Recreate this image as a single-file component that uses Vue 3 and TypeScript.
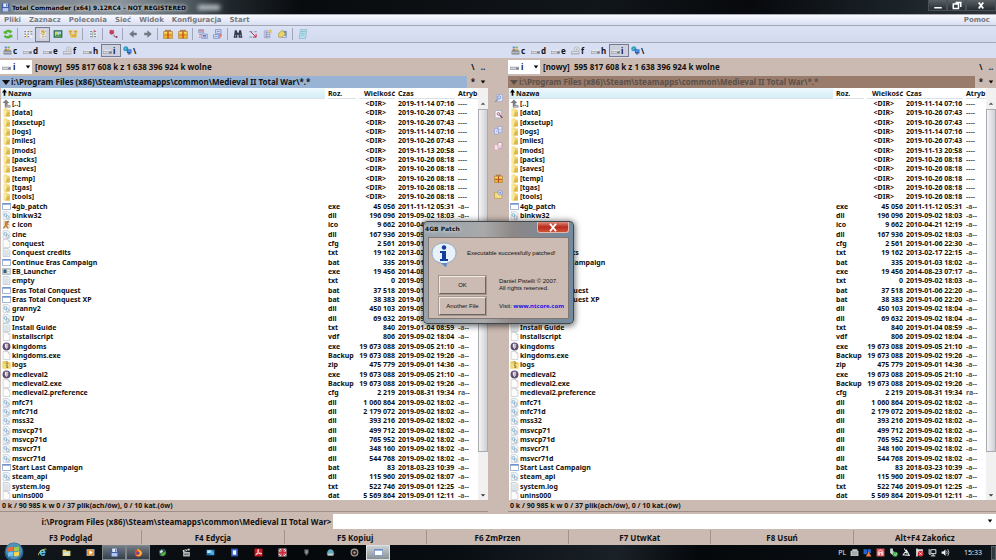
<script setup lang="ts">
import { ref } from 'vue'

interface Entry {
  name: string
  ext: string
  size: string
  date: string
  attr: string
  icon: string
}

const raw = `up|[..]||<DIR>|2019-11-14 07:16|----
folder|[data]||<DIR>|2019-10-26 07:43|----
folder|[dxsetup]||<DIR>|2019-10-26 07:43|----
folder|[logs]||<DIR>|2019-11-14 07:16|----
folder|[miles]||<DIR>|2019-10-26 07:43|----
folder|[mods]||<DIR>|2019-11-13 20:58|----
folder|[packs]||<DIR>|2019-10-26 08:18|----
folder|[saves]||<DIR>|2019-10-26 08:18|----
folder|[temp]||<DIR>|2019-10-26 08:18|----
folder|[tgas]||<DIR>|2019-10-26 08:18|----
folder|[tools]||<DIR>|2019-10-26 08:18|----
window|4gb_patch|exe|45 056|2011-11-12 05:31|-a--
dll|binkw32|dll|196 096|2019-09-02 18:03|-a--
knight|c icon|ico|9 662|2010-04-21 12:19|-a--
dll|cine|dll|167 936|2019-09-02 18:03|-a--
page|conquest|cfg|2 561|2019-01-06 22:30|-a--
text|Conquest credits|txt|19 162|2013-02-17 22:15|-a--
window|Continue Eras Campaign|bat|335|2019-01-03 18:02|-a--
launcher|EB_Launcher|exe|19 456|2014-08-23 07:17|-a--
text|empty|txt|0|2019-09-02 18:03|-a--
window|Eras Total Conquest|bat|37 518|2019-01-06 22:20|-a--
window|Eras Total Conquest XP|bat|38 383|2019-01-06 22:20|-a--
dll|granny2|dll|450 103|2019-09-02 18:04|-a--
dll|IDV|dll|69 632|2019-09-02 18:04|-a--
text|Install Guide|txt|840|2019-01-04 08:59|-a--
page|installscript|vdf|806|2019-09-02 18:04|-a--
shield|kingdoms|exe|19 673 088|2019-09-05 21:10|-a--
page|kingdoms.exe|Backup|19 673 088|2019-09-02 19:26|-a--
zip|logs|zip|475 779|2019-09-01 14:36|-a--
shield|medieval2|exe|19 673 088|2019-09-05 21:10|-a--
page|medieval2.exe|Backup|19 673 088|2019-09-02 19:26|-a--
page|medieval2.preference|cfg|2 219|2019-08-31 19:34|ra--
dll|mfc71|dll|1 060 864|2019-09-02 18:02|-a--
dll|mfc71d|dll|2 179 072|2019-09-02 18:02|-a--
dll|mss32|dll|393 216|2019-09-02 18:02|-a--
dll|msvcp71|dll|499 712|2019-09-02 18:02|-a--
dll|msvcp71d|dll|765 952|2019-09-02 18:02|-a--
dll|msvcr71|dll|348 160|2019-09-02 18:02|-a--
dll|msvcr71d|dll|544 768|2019-09-02 18:02|-a--
window|Start Last Campaign|bat|83|2018-03-23 10:39|-a--
dll|steam_api|dll|115 960|2019-09-02 18:07|-a--
text|system.log|txt|522 746|2019-09-01 12:25|-a--
page|unins000|dat|5 569 864|2019-09-01 12:11|-a--`

const entries: Entry[] = raw.split('\n').map((line) => {
  const [icon, name, ext, size, date, attr] = line.split('|')
  return { icon, name, ext, size, date, attr }
})

const path = 'i:\\Program Files (x86)\\Steam\\steamapps\\common\\Medieval II Total War'
const menus = ['Pliki', 'Zaznacz', 'Polecenia', 'Sieć', 'Widok', 'Konfiguracja', 'Start']
const tools = [
  'refresh', '', 'brief', 'full', 'thumbs', 'tree', '', 'invert', '', 'star', '',
  'left', 'right', '', 'gift', 'gift', '', 'pack', 'unpack', '',
  'find', 'rename', 'sync', 'copyname', '', 'notepad',
]
const drives = [
  { letter: 'c', icon: 'system' },
  { letter: 'd', icon: 'drive' },
  { letter: 'e', icon: 'drive' },
  { letter: 'f', icon: 'optical' },
  { letter: 'h', icon: 'drive' },
  { letter: 'i', icon: 'drive' },
  { letter: '\\', icon: 'network' },
]
const middle = ['view', 'edit', 'copy', 'move', '', 'gift', 'newfolder']
const keys = ['F3 Podgląd', 'F4 Edycja', 'F5 Kopiuj', 'F6 ZmPrzen', 'F7 UtwKat', 'F8 Usuń', 'Alt+F4 Zakończ']
const tasks = [
  { icon: 'ie' }, { icon: 'explorer' }, { icon: 'player' }, { icon: 'floppy', state: 'open' },
  { icon: 'firefox', state: 'open' }, { icon: 'globe' }, { icon: 'clapper' }, { icon: 'monitor' },
  { icon: 'blueapp' }, { icon: 'pdf' }, { icon: 'flag' }, { icon: 'darkshield' }, { icon: 'dome' },
  { icon: 'ring' }, { icon: 'window', state: 'active' },
]
const tray = ['keyboard', 'net', 'redbox', 'usb', 'bell', 'blocked', 'screen', 'sound']
const panels = [
  { id: 'left', active: true },
  { id: 'right', active: false },
]
const drive = ref('i')
const command = ref('')
const dialogOpen = ref(true)
</script>

<template>
  <svg class="sprite" aria-hidden="true">
    <symbol id="refresh" viewBox="0 0 16 16"><path d="M1 7V3l2 1c3-4 9-3 12 0l-3 3c-2-2-5-2-6-1l2 2zM15 9v5l-2-1c-3 3-9 3-12-1l3-3c2 3 5 3 6 1L8 9z" fill="#55b52e" /></symbol>
    <symbol id="brief" viewBox="0 0 16 16"><path d="M1 2h14v12H1z" fill="#eef0fa" /><path d="M2 3h3v2H2zm5 0h3v2H7zm5 0h3v2h-3zM2 7h3v2H2zm5 0h3v2H7zm5 0h3v2h-3zM2 11h3v2H2zm5 0h3v2H7z" fill="#8186a5" /><path d="M10 2h2v3h-2zM5 9h2v4H5z" fill="#e4c95b" /></symbol>
    <symbol id="full" viewBox="0 0 16 16"><path d="M3 1h10v14H3z" fill="#e3e3ec" /><path d="M5 2h5v3H5zm2 3h4v2H7zm0 3h3v2H7zm0 3h2v3H7z" fill="#d8ad2d" /><path d="M11 3h2v1h-2zM4 7h2v1H4zm7 4h2v1h-2z" fill="#777da0" /></symbol>
    <symbol id="thumbs" viewBox="0 0 16 16"><path d="M1 2h14v12H1z" fill="#2c6349" /><path d="M3 4h10v8H3z" fill="#a8d8e9" /><path d="M3 12l3-4 3 2 2-3 2 2v3z" fill="#4d9f34" /><circle cx="5" cy="6" r="1.5" fill="#f2ce34" /></symbol>
    <symbol id="tree" viewBox="0 0 16 16"><path d="M1 2h6v5H1zm8 0h6v5H9zM4 8h10v6H4z" fill="#e8c34c" /><path d="M4 6v4M12 6v4M2 4h4M10 4h4M6 11h6" stroke="#c77f3f" fill="none" /></symbol>
    <symbol id="invert" viewBox="0 0 16 16"><path d="M2 2h12v12H2z" fill="#edf0fb" /><path d="M3 3h4v2H3zm0 4h3v2H3zm0 4h3v2H3zm6-4h4v2H9zm0 4h4v2H9z" fill="#8186aa" /><path d="M9 1l5 3-5 2z" fill="#ba6176" /><path d="M7 5h1v9H7z" fill="#78a660" /></symbol>
    <symbol id="star" viewBox="0 0 16 16"><path d="M6 1v8M2 5h8M3 2l6 6M9 2L3 8" stroke="#c43a57" stroke-width="1.700" /><path d="M9 10h2v2H9zm3 1h3v3h-3z" fill="#7f3145" /></symbol>
    <symbol id="left" viewBox="0 0 16 16"><path d="M2 8l7-6v4h5v4H9v4z" fill="#717783" /></symbol>
    <symbol id="right" viewBox="0 0 16 16"><path d="M14 8L7 2v4H2v4h5v4z" fill="#717783" /></symbol>
    <symbol id="gift" viewBox="0 0 16 16"><path d="M4 4V2h3l1 2 1-2h3v2" fill="none" stroke="#a8642a" stroke-width="1.500" /><path d="M1 4h14v11H1z" fill="#f0b52c" stroke="#a9762a" /><path d="M2 5h12v2H2z" fill="#ffdf6a" /><path d="M7 4h2v11H7zM2 9h12v1H2z" fill="#b34a2a" /></symbol>
    <symbol id="pack" viewBox="0 0 16 16"><path d="M1 1h8v5H1zM6 8h9v7H6z" fill="#c9d3f2" stroke="#7082bb" /><path d="M2 2h6v2H2zM2 8h3v2H2zm0 4h2v2H2z" fill="#d77668" /><path d="M8 10h5v1H8zm0 2h5v1H8z" fill="#4764ac" /></symbol>
    <symbol id="unpack" viewBox="0 0 16 16"><path d="M4 1h9v6H4zM1 9h8v6H1z" fill="#d5ddf6" stroke="#5c75bb" /><path d="M6 3h5v1H6zm-3 8h4v1H3z" fill="#405caa" /><path d="M10 8h4v4h-2v3h-2z" fill="#da7968" /></symbol>
    <symbol id="find" viewBox="0 0 16 16"><path d="M3 2h3l1 4h2l1-4h3l2 12H9V9H7v5H1z" fill="#343949" /><path d="M3 9h2v3H3zm8 0h2v3h-2z" fill="#8791a6" /></symbol>
    <symbol id="rename" viewBox="0 0 16 16"><path d="M2 3h5v2H2zm8 0h4v2h-4zM2 12h5v2H2z" fill="#9aa1bf" /><path d="M4 4l9 9m0-5v5H8" stroke="#b92d3b" stroke-width="1.500" fill="none" /></symbol>
    <symbol id="sync" viewBox="0 0 16 16"><path d="M2 3h9v11H2z" fill="#dfe4f6" stroke="#8a91b2" /><path d="M3 6h8M3 9h8M3 12h8M6 3v11" stroke="#7882ab" /><path d="M10 1h5l-2 3 2 2h-5z" fill="#e6c547" /></symbol>
    <symbol id="copyname" viewBox="0 0 16 16"><path d="M6 3h8v11H6z" fill="#778eb4" /><path d="M1 7l6-5 5 6-5 5H1z" fill="#e9d56d" stroke="#a38d42" /><path d="M8 11h5v2H8z" fill="#d3e0ef" /></symbol>
    <symbol id="notepad" viewBox="0 0 16 16"><path d="M4 1h10l-2 14H2z" fill="#b7e2ef" stroke="#81aabd" /><path d="M5 4h7M5 7h6M4 10h6" stroke="#72adbf" /></symbol>
    <symbol id="drive" viewBox="0 0 16 16"><path d="M0 9l2-2h12l2 2v5H0z" fill="#a2a4ae" /><path d="M0 9l2-2h12l2 2z" fill="#e7e8ec" /><path d="M1 10h14v3H1z" fill="#d3d4d9" /><path d="M11 10h4v3h-4z" fill="#6d7482" /></symbol>
    <symbol id="system" viewBox="0 0 16 16"><path d="M1 9l2-2h10l2 2v6H1z" fill="#7d858f" /><path d="M2 10h12v3H2z" fill="#b3bac1" /><path d="M3 1h4v3H3z" fill="#4f93d0" /><path d="M8 1h4v3H8z" fill="#83ae42" /><path d="M3 5h4v3H3z" fill="#b77b45" /><path d="M8 5h4v3H8z" fill="#d0b23a" /></symbol>
    <symbol id="optical" viewBox="0 0 16 16"><circle cx="10" cy="6" r="4.500" fill="#dfe2e8" stroke="#9da2ac" /><path d="M0 9h15v6H0z" fill="#a1a5af" /><path d="M1 10h13v3H1z" fill="#dcdde2" /><circle cx="10" cy="6" r="1.500" fill="#a9aeb8" /></symbol>
    <symbol id="network" viewBox="0 0 16 16"><circle cx="5" cy="5" r="4.500" fill="#2d9fc6" /><path d="M3 2l3 2-2 4z" fill="#79c87a" /><path d="M7 6h8v7H7z" fill="#2454ac" /><path d="M8 7h6v4H8z" fill="#4f8fe5" /><path d="M9 13h4v2H9z" fill="#414d65" /></symbol>
    <symbol id="up" viewBox="0 0 16 16"><path d="M1 7l6-6 6 6h-3v4h5v4H5V7z" fill="#7c7d83" /><path d="M7 10h7v1H7zm0 3h7v1H7z" fill="#c6c6c9" /></symbol>
    <symbol id="folder" viewBox="0 0 16 16"><path d="M3 1h6l1 2h4v12H3z" fill="#efd372" /><path d="M3 2h5v13H3z" fill="#f8e9a0" /><path d="M9 8l5-1v8H6z" fill="#dcb94a" /></symbol>
    <symbol id="window" viewBox="0 0 18 16"><path d="M1 2h16v12H1z" fill="#fff" stroke="#466cae" /><path d="M1 2h16v2H1z" fill="#3c6fc1" /></symbol>
    <symbol id="page" viewBox="0 0 16 16"><path d="M2 1h9l3 3v11H2z" fill="#fdfdfd" stroke="#b5b8bd" /><path d="M11 1v3h3" fill="#e3e3e5" stroke="#bdbec1" /></symbol>
    <symbol id="text" viewBox="0 0 16 16"><path d="M2 1h9l3 3v11H2z" fill="#eef4f7" stroke="#a9b1b8" /><path d="M4 5h7M4 7h8M4 9h8M4 11h8M4 13h6" stroke="#c2cdd6" /></symbol>
    <symbol id="dll" viewBox="0 0 16 16"><path d="M2 1h9l3 3v11H2z" fill="#f1f6fa" stroke="#b4bfc9" /><circle cx="6" cy="7" r="2.500" fill="none" stroke="#7fabc8" stroke-width="1.500" /><circle cx="10" cy="11" r="2.500" fill="none" stroke="#8fabc0" stroke-width="1.500" /></symbol>
    <symbol id="knight" viewBox="0 0 16 16"><path d="M2 1h12v14H2z" fill="#f1e2c8" /><path d="M5 2h7l-2 4 3 2-4 1 3 6H9l-2-4-3 4H1l4-6z" fill="#bd8247" /><path d="M9 3l3-2-1 4z" fill="#54525d" /></symbol>
    <symbol id="launcher" viewBox="0 0 18 16"><path d="M1 2h16v12H1z" fill="#c4d0d6" stroke="#8f9da5" /><path d="M3 4h6v7H3z" fill="#386073" /><path d="M11 5h4v2h-4zm0 4h4v2h-4z" fill="#eef3f5" /></symbol>
    <symbol id="shield" viewBox="0 0 16 16"><circle cx="8" cy="8" r="7" fill="#5a4c6b" /><path d="M5 3h6v6l-3 4-3-4z" fill="#eee7ef" /><path d="M8 4h2v5l-2 3z" fill="#a195ad" /></symbol>
    <symbol id="zip" viewBox="0 0 16 16"><path d="M1 2h6l1 2h7v11H1z" fill="#e9c851" /><path d="M1 6h14v9H1z" fill="#f3da7a" /><path d="M7 2h3v2H7zm1 3h3v2H8zM7 8h3v2H7zm1 3h3v3H8z" fill="#8a7b3e" /></symbol>
    <symbol id="view" viewBox="0 0 16 16"><path d="M5 1h10v12H5z" fill="#e1e9fb" stroke="#8f9dc6" /><circle cx="9" cy="6" r="3" fill="#c0d7fb" stroke="#526fb4" /><path d="M7 9l-5 5" stroke="#7e8fbd" stroke-width="2" /></symbol>
    <symbol id="edit" viewBox="0 0 16 16"><path d="M2 1h11v13H2z" fill="#f4f6fd" stroke="#939ab8" /><circle cx="8" cy="7" r="2.500" fill="#e7c5cf" stroke="#ad3250" /><path d="M10 9l5 5" stroke="#7d3347" stroke-width="2" /></symbol>
    <symbol id="copy" viewBox="0 0 16 16"><path d="M1 5h7v9H1zM7 1h7v10H7z" fill="#edf1ff" stroke="#7c8dce" /><path d="M9 5h4v3H9zM3 8h3v3H3z" fill="#b0c0f0" /></symbol>
    <symbol id="move" viewBox="0 0 16 16"><path d="M1 5h7v9H1z" fill="#f8e5e9" stroke="#dba7b3" /><path d="M7 1h7v10H7z" fill="#fff0f0" stroke="#a5789d" /><path d="M9 6h3v2H9z" fill="#d79aac" /></symbol>
    <symbol id="newfolder" viewBox="0 0 16 16"><path d="M1 4h5l1 2h7v9H1z" fill="#f5dd86" stroke="#ac8d39" /><circle cx="11" cy="5" r="4" fill="#e7edff" stroke="#5d76bd" /><path d="M11 3v4M9 5h4" stroke="#3c5eae" /></symbol>
    <symbol id="floppy" viewBox="0 0 16 16"><path d="M1 1h14v14H1z" fill="#3e60b0" /><path d="M4 1h8v6H4z" fill="#e9eefb" /><path d="M9 2h2v4H9z" fill="#3e60b0" /><path d="M3 9h10v6H3z" fill="#b8c8ed" /></symbol>
    <symbol id="ie" viewBox="0 0 16 16"><path d="M12 11c-3 4-9 1-8-4 1-4 8-4 8 1H4" fill="none" stroke="#5bc5ef" stroke-width="2.600" /><path d="M1 13C-1 8 12-1 15 3" fill="none" stroke="#e8d052" stroke-width="1.500" /></symbol>
    <symbol id="explorer" viewBox="0 0 16 16"><path d="M1 3h6l1 2h7v9H1z" fill="#e4ce72" /><path d="M2 7h12v6H2z" fill="#bddfe8" /><path d="M4 9h8v4H4z" fill="#f5e6a0" /></symbol>
    <symbol id="player" viewBox="0 0 16 16"><path d="M1 2h14v12H1z" fill="#9fbbcb" /><circle cx="8" cy="8" r="6" fill="#ed9230" /><path d="M6 4l6 4-6 4z" fill="#fff" /></symbol>
    <symbol id="firefox" viewBox="0 0 16 16"><circle cx="8" cy="9" r="6.500" fill="#e84b29" /><path d="M7 0c0 4 8 4 7 10-1 5-8 6-11 2 5 2 8-2 6-5C7 6 5 4 7 0z" fill="#ffb52e" /><circle cx="7" cy="9" r="3" fill="#7142a2" /></symbol>
    <symbol id="globe" viewBox="0 0 16 16"><circle cx="8" cy="8" r="6.500" fill="#294f58" /><path d="M3 6l4-3 2 3-4 4z" fill="#d7e3dc" /><path d="M8 9l6-3-1 5-4 3-5-1z" fill="#55b73d" /></symbol>
    <symbol id="clapper" viewBox="0 0 16 16"><path d="M2 7h12v8H2z" fill="#b5b8b9" /><path d="M1 4l12-3 1 3L2 7z" fill="#e5e7e8" /><path d="M4 3l3 3m1-4l3 3" stroke="#353a3c" stroke-width="2" /><path d="M4 10h8v2H4z" fill="#54595b" /></symbol>
    <symbol id="monitor" viewBox="0 0 16 16"><path d="M1 3h14v10H1z" fill="#2779bc" /><path d="M2 4h8v5H2z" fill="#b3eafa" /><path d="M8 6h6v6H8z" fill="#4ab6e3" /></symbol>
    <symbol id="blueapp" viewBox="0 0 16 16"><path d="M2 1h12v14H2z" fill="#315bbd" /><path d="M5 4h6v8H5z" fill="#f0f4ff" /></symbol>
    <symbol id="pdf" viewBox="0 0 16 16"><path d="M1 1h14v14H1z" fill="#cd1922" /><path d="M3 12c5-3 6-12 4-9-1 4 4 9 7 7-3-2-9 0-11 2z" fill="none" stroke="#fff" stroke-width="1.300" /></symbol>
    <symbol id="flag" viewBox="0 0 16 16"><path d="M1 1h14v14H1z" fill="#eadde0" /><path d="M6 1h4v14H6zM1 6h14v4H1z" fill="#c62c3c" /><path d="M2 2l3 3m9-3l-3 3M2 14l3-3m9 3l-3-3" stroke="#9d3146" stroke-width="1.500" /></symbol>
    <symbol id="darkshield" viewBox="0 0 16 16"><path d="M4 2h8v7l-4 5-4-5z" fill="#4d565c" /><path d="M6 4h4v4l-2 3-2-3z" fill="#8d989e" /></symbol>
    <symbol id="dome" viewBox="0 0 16 16"><path d="M2 9c0-9 12-9 12 0z" fill="#56adbf" /><path d="M1 9h14l-2 5H3z" fill="#86969d" /><path d="M4 10h8v2H4z" fill="#d5edf1" /></symbol>
    <symbol id="ring" viewBox="0 0 16 16"><circle cx="8" cy="8" r="6" fill="#2e2928" stroke="#a9a19b" stroke-width="2" /><circle cx="8" cy="8" r="2" fill="#d7a47e" /></symbol>
    <symbol id="keyboard" viewBox="0 0 16 16"><path d="M1 5h14v9H1zM4 2h9v3H4z" fill="#c4ccc9" /><path d="M3 7h10M3 9h10M3 12h10" stroke="#6f7976" /></symbol>
    <symbol id="net" viewBox="0 0 16 16"><path d="M1 2h6v9H1zm7 0h6v7H8z" fill="#2865ca" /><path d="M10 6l5 9H5z" fill="#ee7d3f" /></symbol>
    <symbol id="redbox" viewBox="0 0 16 16"><path d="M1 1h14v14H1z" fill="#e3575d" /><path d="M4 13V7l4-4 4 4v6M6 13V8h4v5" fill="none" stroke="#fff" stroke-width="1.500" /></symbol>
    <symbol id="usb" viewBox="0 0 16 16"><path d="M2 1h5v4l3 3-3 5-5-4z" fill="#c9d3ce" /><circle cx="11" cy="11" r="4.500" fill="#3eae46" /><path d="M9 11l2 2 3-4" fill="none" stroke="#fff" /></symbol>
    <symbol id="bell" viewBox="0 0 16 16"><path d="M4 1l5 9M2 12l6-8 5 9z" fill="none" stroke="#eef0f1" stroke-width="1.800" /></symbol>
    <symbol id="blocked" viewBox="0 0 16 16"><path d="M2 1h3v14H2zm3 1h9v8H5z" fill="#dedfe0" /><circle cx="10" cy="10" r="5" fill="#d92c34" /><path d="M8 8l4 4m0-4l-4 4" stroke="#fff" stroke-width="1.500" /></symbol>
    <symbol id="screen" viewBox="0 0 16 16"><path d="M5 3h9v7H5zM2 2v9h3m4-1v4m-4 0h8" fill="none" stroke="#e8edef" stroke-width="1.700" /></symbol>
    <symbol id="sound" viewBox="0 0 16 16"><path d="M1 6h3l4-4v12l-4-4H1z" fill="#eff1f2" /><path d="M10 5q2 3 0 6m2-9q4 6 0 12" fill="none" stroke="#eff1f2" stroke-width="1.300" /></symbol>
  </svg>

  <main class="app">
    <header class="title">
      <svg class="ico"><use href="#floppy" /></svg>
      <h1>Total Commander (x64) 9.12RC4 - NOT REGISTERED</h1>
      <span class="blob"></span>
      <div class="caption">
        <button aria-label="Minimize"><svg viewBox="0 0 16 12"><path d="M3 8h10v2H3z" fill="#fff" /></svg></button>
        <button aria-label="Restore"><svg viewBox="0 0 16 12"><path d="M6 2h7v6M3 4h7v6H3z" fill="none" stroke="#fff" stroke-width="2" /></svg></button>
        <button aria-label="Close"><svg viewBox="0 0 16 12"><path d="M5 2l6 8m0-8l-6 8" stroke="#fff" stroke-width="2.400" /></svg></button>
      </div>
    </header>

    <nav class="menu">
      <button v-for="m in menus" :key="m">{{ m }}</button>
      <button class="help">Pomoc</button>
    </nav>

    <div class="toolbar">
      <template v-for="(t, i) in tools" :key="i">
        <button v-if="t" :class="{ pressed: t === 'full' }" :aria-label="t"><svg class="ico"><use :href="'#' + t" /></svg></button>
        <span v-else class="sep"></span>
      </template>
    </div>

    <div class="drivebar">
      <div v-for="p in panels" :key="p.id" class="drives">
        <button v-for="d in drives" :key="d.letter" :class="{ pressed: d.letter === drive }">
          <svg class="ico"><use :href="'#' + d.icon" /></svg>{{ d.letter }}
        </button>
      </div>
    </div>

    <div class="work">
      <template v-for="p in panels" :key="p.id">
        <section class="panel" :class="{ active: p.active }">
          <div class="info">
            <label class="pick">
              <svg class="ico"><use href="#drive" /></svg>
              <select v-model="drive" aria-label="Drive">
                <option v-for="d in drives.slice(0, 6)" :key="d.letter">{{ d.letter }}</option>
              </select>
              <svg class="arrow" viewBox="0 0 8 8"><path d="M1 2h6L4 6z" /></svg>
            </label>
            <span class="free">[nowy]&nbsp; 595 817 608 k z 1 638 396 924 k wolne</span>
            <span class="pair"><button>\</button><button>..</button></span>
          </div>
          <div class="pathrow">
            <button class="path"><svg class="tri" viewBox="0 0 8 8"><path d="M0 2h8L4 7z" fill="currentColor" /></svg>{{ path }}\*.*</button>
            <span class="pair"><button>*</button><button aria-label="History"><svg class="arrow" viewBox="0 0 8 8"><path d="M1 2h6L4 6z" /></svg></button></span>
          </div>
          <div class="list">
            <table>
              <thead>
                <tr>
                  <th class="sorted"><svg class="up" viewBox="0 0 6 8"><path d="M3 0l3 4H4v4H2V4H0z" /></svg>Nazwa</th>
                  <th>Roz.</th>
                  <th class="size">Wielkość</th>
                  <th>Czas</th>
                  <th>Atryb</th>
                </tr>
              </thead>
              <tbody>
                <tr v-for="e in entries" :key="e.name + e.ext">
                  <td class="name"><svg class="ico"><use :href="'#' + e.icon" /></svg>{{ e.name }}</td>
                  <td>{{ e.ext }}</td>
                  <td class="size" :class="{ dir: !e.ext }">{{ e.size }}</td>
                  <td>{{ e.date }}</td>
                  <td class="attr">{{ e.attr }}</td>
                </tr>
              </tbody>
            </table>
            <div class="scroll">
              <svg viewBox="0 0 8 8"><path d="M1 5h6L4 2z" fill="#555" /></svg>
              <div class="track"><div class="thumb"></div></div>
              <svg viewBox="0 0 8 8"><path d="M1 3h6L4 6z" fill="#333" /></svg>
            </div>
          </div>
          <footer class="status">0 k / 90 985 k w 0 / 37 plik(ach/ów), 0 / 10 kat.(ów)</footer>
        </section>
        <div v-if="p.active" class="middle">
          <template v-for="(m, i) in middle" :key="i">
            <button v-if="m" :aria-label="m"><svg class="ico"><use :href="'#' + m" /></svg></button>
            <span v-else></span>
          </template>
        </div>
      </template>
    </div>

    <div class="command">
      <label for="cmd">{{ path }}&gt;</label>
      <div class="entry">
        <input id="cmd" v-model="command" type="text" />
        <svg class="arrow" viewBox="0 0 8 8"><path d="M1 2h6L4 6z" /></svg>
      </div>
    </div>

    <div class="keys"><button v-for="k in keys" :key="k">{{ k }}</button></div>

    <footer class="taskbar">
      <button class="start" aria-label="Start">
        <svg viewBox="0 0 20 18">
          <circle cx="10" cy="10" r="9.500" fill="#2c5f88" /><circle cx="10" cy="9" r="8" fill="#4f92b8" />
          <path d="M4 6q3-2 5-1v4q-3-1-5 1z" fill="#ee6a3d" /><path d="M10 5q3 1 5-1v4q-2 2-5 1z" fill="#9fcb4c" />
          <path d="M4 11q2-2 5-1v4q-3-1-5 1z" fill="#72c4f0" /><path d="M10 10q3 1 5-1v4q-2 2-5 1z" fill="#fbd650" />
        </svg>
      </button>
      <button v-for="t in tasks" :key="t.icon" class="task" :class="t.state" :aria-label="t.icon"><svg class="ico"><use :href="'#' + t.icon" /></svg></button>
      <div class="tray">
        <span>PL</span>
        <svg v-for="t in tray" :key="t" class="ico"><use :href="'#' + t" /></svg>
        <time>15:33</time>
        <button class="desk" aria-label="Show desktop"></button>
      </div>
    </footer>

    <div v-if="dialogOpen" class="dialog" role="dialog" aria-labelledby="dlg">
      <div class="dtitle">
        <h2 id="dlg">4GB Patch</h2>
        <button aria-label="Close" @click="dialogOpen = false"><svg viewBox="0 0 16 12"><path d="M4 1l8 10m0-10L4 11" stroke="#fff" stroke-width="2.600" /></svg></button>
      </div>
      <div class="dbody">
        <svg class="bubble" viewBox="0 0 26 26">
          <path d="M13 1c7 0 12 4 12 10 0 5-4 9-9 10l-1 4-5-4C4 20 1 16 1 11 1 5 6 1 13 1z" fill="#e9f1fa" stroke="#93a9c4" />
          <path d="M16 21l-1 4-5-4z" fill="#5f87ba" />
          <circle cx="13" cy="5.500" r="2.200" fill="#123d9b" /><path d="M9 9h6v8h2v2H9v-2h2v-6H9z" fill="#123d9b" />
        </svg>
        <p class="msg">Executable successfully patched!</p>
        <button class="btn" @click="dialogOpen = false">OK</button>
        <p>Daniel Pistelli © 2007.<br />All rights reserved.</p>
        <button class="btn">Another File</button>
        <p class="visit"><span>Visit:</span><a href="#ntcore">www.ntcore.com</a></p>
      </div>
    </div>
  </main>
</template>

<style>
body {
  margin: 0;
  overflow: hidden;
}
</style>

<style scoped>
.sprite {
  position: absolute;
  width: 0;
  height: 0;
}
.app {
  display: flex;
  flex-direction: column;
  height: 100vh;
  background: #cbbab2;
  color: #111;
  font: bold 7px/9px 'Noto Sans', sans-serif;
  white-space: nowrap;
}
button,
select,
input {
  font: inherit;
  color: inherit;
  background: none;
  border: 0;
  margin: 0;
  padding: 0;
  border-radius: 0;
  outline: 0;
  box-sizing: border-box;
}
h1,
h2,
p {
  margin: 0;
  font: inherit;
}
.ico {
  width: 9px;
  height: 9px;
  flex: none;
}
.arrow {
  width: 6px;
  height: 6px;
}
.title {
  display: flex;
  align-items: center;
  height: 14px;
  padding-left: 1px;
  background: linear-gradient(90deg, #78828a 0, #8c959d 120px, #515a61 190px, #20272c 230px, #080b0e 300px, #11161a 60%, #07090c 75%, #1a2228 90%, #30363b);
  font: bold 6px 'DejaVu Sans', sans-serif;
}
.title h1 {
  margin-left: 2px;
  color: #000;
  text-shadow: 0 0 4px #dde3e8, 0 0 3px #c5ced5;
}
.blob {
  width: 22px;
  height: 5px;
  margin-left: 12px;
  background: #bcc4ca;
  filter: blur(2px);
}
.caption {
  display: flex;
  align-self: flex-start;
  margin-left: auto;
}
.caption button {
  width: 19px;
  height: 11px;
  background: linear-gradient(#5a6166, #272e33);
  border: 1px solid #4b5257;
  border-top: 0;
}
.caption button:last-child {
  width: 30px;
}
.caption svg {
  display: block;
  width: 12px;
  height: 9px;
  margin: auto;
}
.menu {
  display: flex;
  gap: 8px;
  align-items: center;
  height: 12px;
  padding: 0 6px 0 4px;
  border-top: 1px solid #a8adb5;
  border-bottom: 1px solid #a2a5b2;
  box-sizing: border-box;
  background: linear-gradient(#f9faff, #d9dff1);
  color: #777981;
  font: bold 7px/9px 'DejaVu Sans', sans-serif;
}
.help {
  margin-left: auto;
}
.toolbar {
  display: flex;
  align-items: center;
  height: 17px;
  box-sizing: border-box;
  border-bottom: 1px solid #a5a8b6;
  background: linear-gradient(#dce2f5, #d3d9ee);
}
.toolbar button {
  display: grid;
  place-items: center;
  width: 15px;
  height: 15px;
}
.toolbar .ico {
  width: 10px;
  height: 10px;
}
.pressed {
  background: #cdd1df;
  box-shadow: inset 0 0 0 1px #777b8b;
}
.sep {
  width: 1px;
  height: 12px;
  margin: 0 2px;
  background: #a0a5b8;
}
.drivebar {
  display: flex;
  gap: 20px;
  height: 15px;
  background: #d9dff3;
}
.drives {
  display: flex;
  flex: 1;
  align-items: center;
  padding-left: 1px;
}
.drives button {
  display: flex;
  align-items: center;
  gap: 1px;
  width: 20px;
  height: 13px;
  padding-left: 2px;
  font-size: 8px;
}
.work {
  display: flex;
  flex: 1;
  min-height: 0;
}
.panel {
  display: flex;
  flex: 1;
  flex-direction: column;
  min-width: 0;
}
.info,
.pathrow {
  display: flex;
  align-items: center;
  font-size: 8px;
}
.info {
  height: 17px;
}
.pick {
  display: flex;
  align-items: center;
  width: 32px;
  height: 14px;
  padding-left: 2px;
  margin-right: 3px;
  box-sizing: border-box;
  background: #fff;
}
.pick select {
  width: 14px;
  padding-left: 2px;
  appearance: none;
}
.free {
  flex: 1;
}
.pair {
  display: grid;
  grid-template-columns: 1fr 1fr;
  width: 20px;
  margin-left: 1px;
}
.pathrow {
  height: 13px;
}
.path {
  display: flex;
  flex: 1;
  align-items: center;
  gap: 1px;
  height: 12px;
  padding-left: 2px;
  text-align: left;
  background: #997c6c;
  color: #5b5049;
}
.active .path {
  background: #98b3d3;
  color: #111;
}
.tri {
  width: 8px;
  height: 8px;
}
.list {
  display: flex;
  flex: 1;
  min-height: 0;
  margin-left: 1px;
  background: #fff;
}
table {
  display: flex;
  flex: 1;
  flex-direction: column;
}
tbody {
  display: grid;
  flex: 1;
  grid-auto-rows: 1fr;
  min-height: 0;
}
tr {
  display: grid;
  grid-template-columns: 1fr 28px 36px 57px 20px;
  column-gap: 3px;
  min-height: 0;
  align-items: center;
}
th,
td {
  display: block;
  padding: 0;
  text-align: left;
  line-height: 9px;
}
th {
  height: 11px;
  line-height: 11px;
  border-bottom: 1px solid #d9e2e8;
  box-sizing: border-box;
}
.sorted {
  background: linear-gradient(#eef9fd, #d5eef8);
}
.up {
  width: 5px;
  height: 7px;
  margin: 0 1px;
}
.name {
  display: flex;
  align-items: center;
  gap: 1px;
  padding-left: 1px;
}
.size {
  text-align: right;
}
.dir {
  padding-right: 9px;
}
.attr {
  color: #555;
}
.scroll {
  display: flex;
  flex-direction: column;
  width: 10px;
  background: #f1f1f1;
}
.scroll svg {
  height: 8px;
  margin: 1px 2px;
}
.scroll > svg:first-child {
  margin-top: 12px;
}
.track {
  flex: 1;
}
.thumb {
  height: 90%;
  box-sizing: border-box;
  border: 1px solid #a9abb0;
  background: linear-gradient(90deg, #f5f5f5, #cfd0d5);
}
.status {
  height: 11px;
  padding-left: 2px;
  line-height: 11px;
  border-bottom: 1px solid #9e8f88;
}
.middle {
  display: flex;
  flex-direction: column;
  align-items: center;
  width: 20px;
  padding-top: 34px;
}
.middle button,
.middle span {
  width: 12px;
  height: 15px;
  margin-bottom: 1px;
}
.command {
  display: grid;
  grid-template-columns: 1fr 2fr;
  align-items: center;
  gap: 2px;
  height: 18px;
  font-size: 8px;
}
.command label {
  text-align: right;
}
.entry {
  display: flex;
  align-items: center;
  height: 15px;
  padding-right: 3px;
  background: #fff;
}
.entry input {
  flex: 1;
}
.keys {
  display: grid;
  grid-template-columns: repeat(7, 1fr);
  height: 15px;
  font-size: 8px;
}
.keys button {
  height: 14px;
  border-right: 1px solid #a3938b;
}
.keys button:last-child {
  border: 0;
}
.taskbar {
  display: flex;
  align-items: center;
  height: 15px;
  background: linear-gradient(110deg, #12181d, #05080b 30%, #080d12 45%, #1a2127 62%, #05080b 70%, #0c1318);
}
.start {
  width: 30px;
  height: 18px;
  margin-top: -3px;
  z-index: 1;
}
.start svg {
  display: block;
  width: 20px;
  height: 18px;
  margin-left: 4px;
}
.task {
  display: grid;
  place-items: center;
  width: 24px;
  height: 15px;
}
.open {
  background: linear-gradient(#737b84, #353e48);
  border: 1px solid #7d858d;
}
.task.active {
  background: linear-gradient(#cbd1d4, #889096);
  border: 1px solid #dce0e2;
}
.tray {
  display: flex;
  align-items: center;
  gap: 4px;
  margin-left: auto;
  color: #e4e8ea;
  font-weight: normal;
}
time {
  margin: 0 5px 0 10px;
}
.desk {
  width: 5px;
  height: 14px;
  background: #31383e;
  border: 1px solid #596168;
}
.dialog {
  position: absolute;
  top: 221px;
  left: calc(50% - 75px);
  width: 151px;
  padding: 0 4px 4px;
  box-sizing: border-box;
  border: 1px solid #40474d;
  border-radius: 4px;
  background: linear-gradient(90deg, #95a2ac, #a9a9aa 40%, #8d8787 60%, #718ba0);
  box-shadow: 0 1px 6px 1px #0009;
  font: 6px/7px 'Liberation Sans', sans-serif;
}
.dtitle {
  display: flex;
  justify-content: space-between;
  height: 15px;
  margin-left: -3px;
  font: bold 6px/14px 'DejaVu Sans', sans-serif;
}
.dtitle h2 {
  text-shadow: 0 0 4px #fff;
}
.dtitle button {
  width: 32px;
  height: 11px;
  border: 1px solid #e4b7aa;
  border-top: 0;
  border-radius: 0 0 3px 3px;
  background: linear-gradient(#dc8c7a, #b92b1d 50%, #cf5138);
}
.dtitle svg {
  display: block;
  width: 12px;
  height: 9px;
  margin: auto;
}
.dbody {
  display: grid;
  grid-template-columns: 47px 1fr;
  grid-template-rows: 31px 18px 18px;
  align-items: center;
  gap: 3px 13px;
  padding: 4px 4px 3px 10px;
  background: #cbbbb3;
  border: 1px solid #827873;
}
.bubble {
  align-self: start;
  width: 26px;
  height: 26px;
  margin-left: -8px;
}
.msg {
  align-self: start;
  margin: 8px 0 0 -32px;
}
.btn {
  height: 18px;
  border: 1px solid #6f645f;
  border-top-color: #f3e9e4;
  border-left-color: #f3e9e4;
  box-shadow: 0 0 0 1px #a39790;
}
.visit {
  display: flex;
  justify-content: space-between;
}
.visit a {
  color: #1b12e8;
  font: bold 6px/7px 'Noto Sans', sans-serif;
  text-decoration: none;
}
</style>
